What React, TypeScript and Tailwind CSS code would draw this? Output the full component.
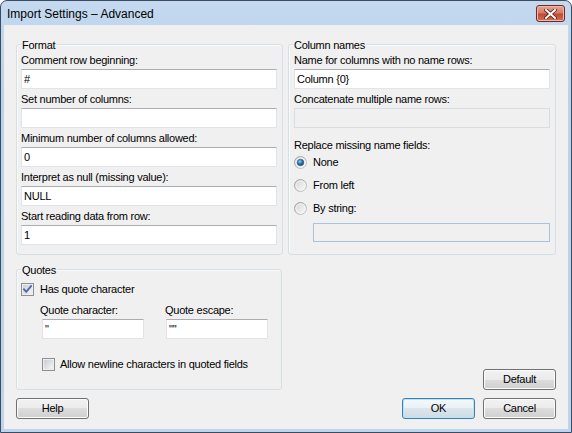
import React from "react";

function Radio({ checked, id }: { checked?: boolean; id: string }) {
  return (
    <svg width="13" height="13" viewBox="0 0 13 13" className="shrink-0">
      <defs>
        <linearGradient id={`ro${id}`} x1="0" y1="0" x2="1" y2="1">
          <stop offset="0" stopColor="#9a9a9a" />
          <stop offset="1" stopColor="#c8c8c8" />
        </linearGradient>
        <linearGradient id={`ri${id}`} x1="0" y1="0" x2="1" y2="1">
          <stop offset="0" stopColor="#d4d4d4" />
          <stop offset="1" stopColor="#fbfbfb" />
        </linearGradient>
        <radialGradient id={`rd${id}`} cx="0.4" cy="0.35" r="0.7">
          <stop offset="0" stopColor="#8fd4f8" />
          <stop offset="0.45" stopColor="#2d7fb8" />
          <stop offset="1" stopColor="#0f3f6b" />
        </radialGradient>
      </defs>
      <circle cx="6.5" cy="6.5" r="6" fill={`url(#ri${id})`} stroke={`url(#ro${id})`} strokeWidth="1" />
      <circle cx="6.5" cy="6.5" r="4.5" fill="none" stroke="#f4f4f4" strokeWidth="0.8" />
      {checked && <circle cx="6.5" cy="6.5" r="3.3" fill={`url(#rd${id})`} stroke="#1c4f7a" strokeWidth="0.5" />}
    </svg>
  );
}

function Check({ checked, id }: { checked?: boolean; id: string }) {
  return (
    <svg width="13" height="13" viewBox="0 0 13 13" className="shrink-0">
      <defs>
        <linearGradient id={`cb${id}`} x1="0" y1="0" x2="1" y2="1">
          <stop offset="0" stopColor="#c9ccd2" />
          <stop offset="1" stopColor="#f7f7f7" />
        </linearGradient>
      </defs>
      <rect x="0.5" y="0.5" width="12" height="12" fill="#f4f4f4" stroke="#8e8f8f" />
      <rect x="2" y="2" width="9" height="9" fill={`url(#cb${id})`} stroke="#d8dadd" strokeWidth="0.5" />
      {checked && (
        <path d="M3 6.3 L5.3 8.8 L10 3.2" fill="none" stroke="#4f6aa0" strokeWidth="1.9" strokeLinecap="square" />
      )}
    </svg>
  );
}

function TextBox({ value, className }: { value?: string; className?: string }) {
  return (
    <div
      className={
        "h-[20px] bg-white border border-[#e2e3ea] border-t-[#abadb3] pl-[2px] flex items-center leading-[13px] " +
        (className || "")
      }
    >
      {value}
    </div>
  );
}

function Group({ title, className, children }: { title: string; className?: string; children: React.ReactNode }) {
  return (
    <div className={"relative rounded-[3px] border border-[#d5dfe5] shadow-[inset_1px_1px_0_#fafafa] " + (className || "")}>
      <span className="absolute left-[4px] top-[-6px] bg-[#f0f0f0] px-[1px] leading-[13px]">{title}</span>
      {children}
    </div>
  );
}

function Btn({ label, def }: { label: string; def?: boolean }) {
  return (
    <div
      className={
        def
          ? "w-[73px] h-[21px] rounded-[3px] border border-[#3c7fb1] bg-[linear-gradient(to_bottom,#f3f8fb_0%,#eaf1f6_50%,#dbe5ec_50%,#cfdbe4_100%)] shadow-[inset_0_0_0_1px_#b9e3f8] flex items-center justify-center leading-[13px]"
          : "w-[73px] h-[21px] rounded-[3px] border border-[#707070] bg-[linear-gradient(to_bottom,#f2f2f2_0%,#ebebeb_50%,#dddddd_50%,#cfcfcf_100%)] shadow-[inset_0_0_0_1px_#fcfcfc] flex items-center justify-center leading-[13px]"
      }
    >
      {label}
    </div>
  );
}

function Field({ label, value, first }: { label: string; value?: string; first?: boolean }) {
  return (
    <div className={first ? "" : "mt-[4px]"}>
      <div className="leading-[13px] h-[13px]">{label}</div>
      <TextBox value={value} className="mt-[2px]" />
    </div>
  );
}

export default function App() {
  return (
    <div
      className="w-[572px] h-[433px] rounded-t-[7px] border border-[#3b4c60] bg-[linear-gradient(to_bottom,#c4d9ef_0%,#bad2eb_20%,#bdd4ec_100%)] flex flex-col overflow-hidden text-[11px] text-black tracking-[-0.25px]"
      style={{ fontFamily: '"Liberation Sans", Arial, sans-serif' }}
    >
      <div className="h-[24px] flex justify-between items-start pl-[6px] pr-[6px]">
        <div className="text-[12px] leading-[16px] pt-[5px] tracking-normal">Import Settings – Advanced</div>
        <div className="mt-[4px] w-[29px] h-[17px] rounded-[3px] border border-[#6e2b26] bg-[linear-gradient(to_bottom,#e8a493_0%,#d67a68_45%,#c24a32_55%,#d0715a_100%)] shadow-[inset_0_0_0_1px_#efb8ab] flex items-center justify-center">
          <svg width="13" height="10" viewBox="0 0 13 10">
            <path d="M2 1 L11 9 M11 1 L2 9" stroke="#5a2019" strokeWidth="3.6" strokeLinecap="square" />
            <path d="M2 1 L11 9 M11 1 L2 9" stroke="#ffffff" strokeWidth="2" strokeLinecap="square" />
          </svg>
        </div>
      </div>
      <div className="mx-[3px] mb-[3px] flex-1 bg-[#f0f0f0] px-[12px] pt-[19px] flex flex-col">
        <div className="flex gap-[5px]">
          <Group title="Format" className="w-[267px] h-[211px] pt-[9px] pl-[4px] pr-[5px]">
            <Field first label="Comment row beginning:" value="#" />
            <Field label="Set number of columns:" value="" />
            <Field label="Minimum number of columns allowed:" value="0" />
            <Field label="Interpret as null (missing value):" value="NULL" />
            <Field label="Start reading data from row:" value="1" />
          </Group>
          <Group title="Column names" className="w-[268px] h-[211px] pt-[9px] pl-[5px] pr-[5px]">
            <Field first label="Name for columns with no name rows:" value="Column {0}" />
            <div className="mt-[4px]">
              <div className="leading-[13px] h-[13px]">Concatenate multiple name rows:</div>
              <div className="mt-[2px] h-[20px] border border-[#d9dde2] bg-[#f0f0f0]" />
            </div>
            <div className="mt-[11px] leading-[13px] h-[13px]">Replace missing name fields:</div>
            <div className="mt-[2px] flex flex-col gap-[6px]">
              <div className="h-[17px] flex items-center gap-[6px]">
                <Radio id="a" checked />
                <span className="leading-[13px]">None</span>
              </div>
              <div className="h-[17px] flex items-center gap-[6px]">
                <Radio id="b" />
                <span className="leading-[13px]">From left</span>
              </div>
              <div className="h-[17px] flex items-center gap-[6px]">
                <Radio id="c" />
                <span className="leading-[13px]">By string:</span>
              </div>
            </div>
            <div className="mt-[6px] ml-[19px] h-[19px] border border-[#abc3da] bg-[#f0f0f0]" />
          </Group>
        </div>
        <div className="mt-[14px] flex justify-between items-end">
          <Group title="Quotes" className="w-[266px] h-[121px] pt-[13px] pl-[4px]">
            <div className="h-[13px] flex items-center gap-[6px]">
              <Check id="q1" checked />
              <span className="leading-[13px]">Has quote character</span>
            </div>
            <div className="mt-[8px] ml-[19px] flex gap-[21px]">
              <div className="w-[104px]">
                <div className="leading-[13px] h-[13px]">Quote character:</div>
                <TextBox value={'"'} className="mt-[2px] ml-[2px]" />
              </div>
              <div className="w-[103px]">
                <div className="leading-[13px] h-[13px]">Quote escape:</div>
                <TextBox value={'""'} className="mt-[2px] ml-[1px]" />
              </div>
            </div>
            <div className="mt-[19px] ml-[21px] h-[13px] flex items-center gap-[5px]">
              <Check id="q2" />
              <span className="leading-[13px]">Allow newline characters in quoted fields</span>
            </div>
          </Group>
          <Btn label="Default" />
        </div>
        <div className="mt-[8px] flex justify-between">
          <Btn label="Help" />
          <div className="flex gap-[8px]">
            <Btn label="OK" def />
            <Btn label="Cancel" />
          </div>
        </div>
      </div>
    </div>
  );
}
